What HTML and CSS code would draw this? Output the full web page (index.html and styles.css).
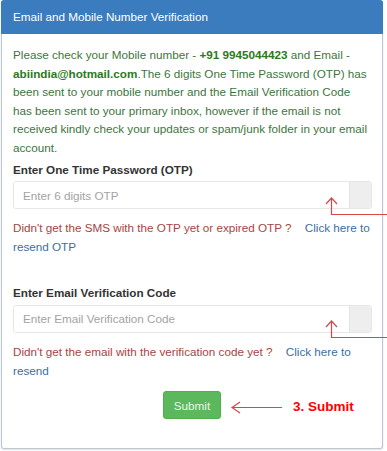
FILE: index.html
```html
<!DOCTYPE html>
<html>
<head>
<meta charset="utf-8">
<link rel="stylesheet" href="styles.css">
</head>
<body>
<div class="panel">
  <div class="panel-heading">Email and Mobile Number Verification</div>
  <div class="panel-body">
    <p class="info">Please check your Mobile number - <b>+91 9945044423</b> and Email - <b>abiindia@hotmail.com</b>.The 6 digits One Time Password (OTP) has been sent to your mobile number and the Email Verification Code has been sent to your primary inbox, however if the email is not received kindly check your updates or spam/junk folder in your email account.</p>
    <div class="group">
      <label class="label">Enter One Time Password (OTP)</label>
      <div class="input-wrap">
        <input class="field" type="text" placeholder="Enter 6 digits OTP">
        <span class="addon"></span>
      </div>
      <p class="hint">Didn't get the SMS with the OTP yet or expired OTP ? <a class="link">Click here to resend OTP</a></p>
    </div>
    <div class="group second">
      <label class="label">Enter Email Verification Code</label>
      <div class="input-wrap">
        <input class="field" type="text" placeholder="Enter Email Verification Code">
        <span class="addon"></span>
      </div>
      <p class="hint">Didn't get the email with the verification code yet ? <a class="link">Click here to resend</a></p>
    </div>
    <div class="actions">
      <button class="btn">Submit</button>
    </div>
  </div>
</div>
<svg class="overlay" width="387" height="451" viewBox="0 0 387 451">
  <g fill="none" stroke="#d84848" stroke-width="1.2">
    <path d="M331.5 198 V214.5 H387"/>
    <path d="M326 204 L331.5 198 L337 204"/>
    <path d="M331.5 321 V337.5 H387"/>
    <path d="M326 327 L331.5 321 L337 327"/>
    <path d="M232 407.5 H282"/>
    <path d="M240 402 L232 407.5 L240 413"/>
  </g>
</svg>
<span class="note">3. Submit</span>
</body>
</html>
```
FILE: styles.css
```css
html, body {
  margin: 0;
  padding: 0;
  background: #ffffff;
}
body {
  width: 387px;
  height: 451px;
  position: relative;
  overflow: hidden;
  font-family: "Liberation Sans", Arial, sans-serif;
  font-size: 11.7px;
  line-height: 18.6px;
  color: #333333;
}
.panel {
  margin-left: 1px;
  width: 382px;
  height: 449px;
  border: 1px solid #b9c6d3;
  border-top: none;
  border-radius: 3px;
  box-sizing: border-box;
  box-shadow: 0 1px 2px rgba(0,0,0,0.12);
  display: flex;
  flex-direction: column;
}
.panel-heading {
  background: #3a7cbd;
  color: #ffffff;
  height: 34px;
  padding: 0 12px;
  display: flex;
  align-items: center;
  border-radius: 3px 3px 0 0;
  margin: 0 -1px;
}
.panel-body {
  padding: 12px 11px 0 11px;
}
.info {
  margin: 0;
  color: #3c763d;
}
.info b {
  color: #2b7a1d;
}
.group {
  margin-top: 3px;
}
.group.second {
  margin-top: 28px;
}
.label {
  display: block;
  font-weight: bold;
  color: #333333;
}
.input-wrap {
  margin-top: 2px;
  display: flex;
  height: 28px;
  width: 359px;
  border: 1px solid #e6e6e6;
  border-radius: 3px;
  box-sizing: border-box;
  overflow: hidden;
}
.field {
  flex: 1;
  min-width: 0;
  border: none;
  outline: none;
  padding: 0 9px;
  font-family: "Liberation Sans", Arial, sans-serif;
  font-size: 11.7px;
  color: #555555;
  background: #ffffff;
}
.field::placeholder {
  color: #a3a3a3;
}
.addon {
  width: 21px;
  background: #eeeeee;
  border-left: 1px solid #e2e2e2;
}
.hint {
  margin: 10px 0 0 0;
  color: #a94442;
}
.link {
  color: #3a6ea5;
  margin-left: 10px;
}
.actions {
  display: flex;
  justify-content: center;
  margin-top: 11px;
}
.btn {
  width: 58px;
  height: 28px;
  background: #5cb85c;
  color: #e8f5e8;
  border: 1px solid #52ad52;
  border-radius: 3px;
  font-family: "Liberation Sans", Arial, sans-serif;
  font-size: 11.7px;
  padding: 0;
}
.overlay {
  position: absolute;
  left: 0;
  top: 0;
  pointer-events: none;
}
.note {
  position: absolute;
  left: 293px;
  top: 398px;
  color: #ff0000;
  font-weight: bold;
  font-size: 13.5px;
  line-height: 18px;
}
```
